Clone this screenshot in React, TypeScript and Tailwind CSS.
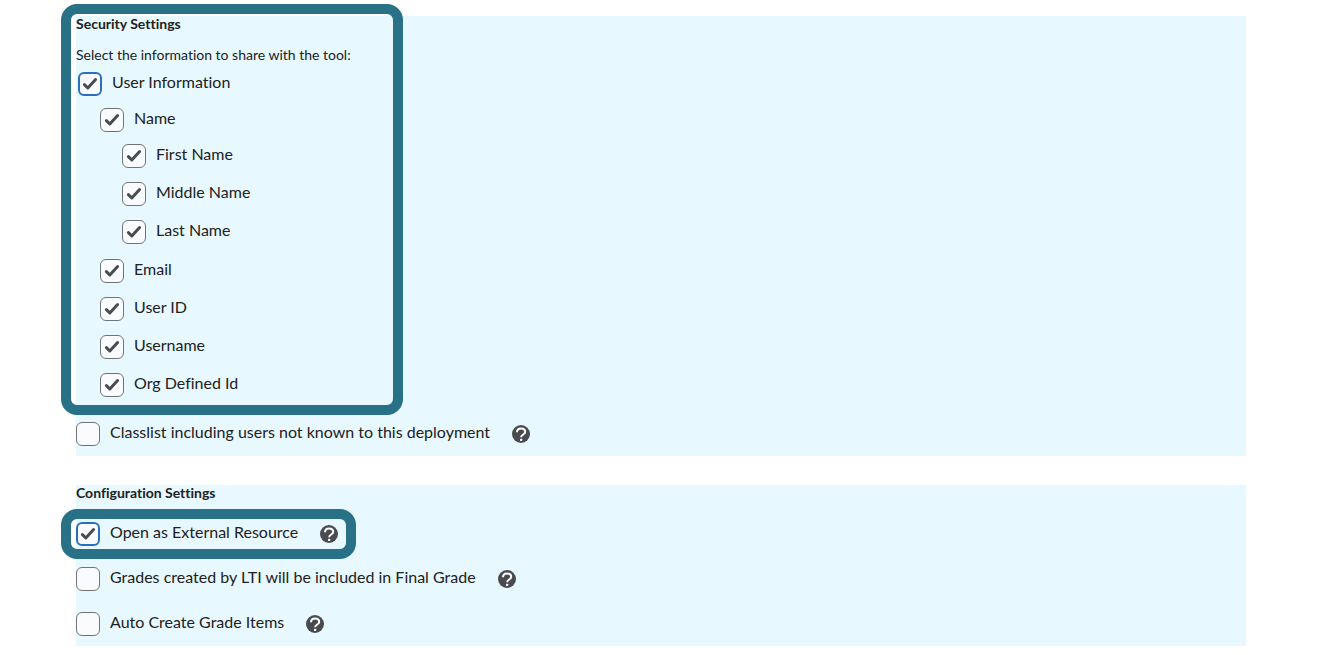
import { useState, type ReactNode } from "react";

function CheckMark() {
  return (
    <svg
      viewBox="0 0 24 24"
      aria-hidden="true"
      className="pointer-events-none col-start-1 row-start-1 hidden size-6 peer-checked:block"
    >
      <path
        d="M6.4 12.6 9.8 16 17.6 7.6"
        fill="none"
        stroke="#494c4e"
        strokeWidth="3"
        strokeLinecap="round"
        strokeLinejoin="round"
      />
    </svg>
  );
}

function HelpButton({ topic }: { topic: string }) {
  return (
    <button type="button" aria-label={`Help: ${topic}`} className="size-[18px] shrink-0">
      <svg viewBox="0 0 18 18" aria-hidden="true" className="block size-[18px]">
        <circle cx="9" cy="9" r="9" fill="#494c4e" />
        <path
          d="M5 7.3C5 5 6.8 3.5 9.1 3.5s4.1 1.4 4.1 3.5c0 2.7-4.1 2.3-4.1 5.2"
          fill="none"
          stroke="#ffffff"
          strokeWidth="2"
        />
        <rect x="8" y="13.7" width="2.2" height="2.2" rx="0.6" fill="#ffffff" />
      </svg>
    </button>
  );
}

type CheckRowProps = {
  id: string;
  label: string;
  checked?: boolean;
  active?: boolean;
  help?: boolean;
};

function CheckRow({ id, label, checked = false, active = false, help = false }: CheckRowProps) {
  const [on, setOn] = useState(checked);
  return (
    <div className="flex h-6 items-center">
      <span className="grid shrink-0">
        <input
          id={id}
          type="checkbox"
          checked={on}
          onChange={(e) => setOn(e.target.checked)}
          className={`peer col-start-1 row-start-1 size-6 appearance-none rounded-md bg-[#f9fbff] ${
            active ? "border-2 border-[#2b6fc0]" : "border border-[#6e7477]"
          }`}
        />
        <CheckMark />
      </span>
      <label htmlFor={id} className="pr-[22px] pb-1 pl-2.5 text-base leading-5">
        {label}
      </label>
      {help && <HelpButton topic={label} />}
    </div>
  );
}

function Section({ title, children }: { title: string; children: ReactNode }) {
  return (
    <section className="bg-[#e8f8ff] pb-2.5">
      <h2 className="text-sm leading-4 font-bold">{title}</h2>
      {children}
    </section>
  );
}

export default function App() {
  return (
    <main className="flex flex-col gap-[29px] bg-white pt-4 pr-[79px] pb-2.5 pl-[76px] font-['Lato',sans-serif] text-[#202122] [font-variant-ligatures:none]">
      <div className="relative">
        <Section title="Security Settings">
          <p className="mt-[15px] text-sm leading-4">Select the information to share with the tool:</p>
          <div className="mt-[9px] pl-0.5">
            <CheckRow id="user-info" label="User Information" checked active />
            <ul className="mt-3 flex flex-col gap-3.5 pl-[22px]">
              <li>
                <CheckRow id="name" label="Name" checked />
                <ul className="mt-3 flex flex-col gap-3.5 pb-px pl-[22px]">
                  <li><CheckRow id="first-name" label="First Name" checked /></li>
                  <li><CheckRow id="middle-name" label="Middle Name" checked /></li>
                  <li><CheckRow id="last-name" label="Last Name" checked /></li>
                </ul>
              </li>
              <li><CheckRow id="email" label="Email" checked /></li>
              <li><CheckRow id="user-id" label="User ID" checked /></li>
              <li><CheckRow id="username" label="Username" checked /></li>
              <li><CheckRow id="org-id" label="Org Defined Id" checked /></li>
            </ul>
          </div>
          <div className="mt-[25px]">
            <CheckRow id="classlist" label="Classlist including users not known to this deployment" help />
          </div>
        </Section>
        <div className="pointer-events-none absolute -top-3 bottom-[41px] -left-[15px] w-[342px] rounded-2xl border-10 border-[#287187]" />
      </div>

      <Section title="Configuration Settings">
        <div className="mt-[21px] flex flex-col items-start gap-[21px]">
          <div className="relative">
            <CheckRow id="external" label="Open as External Resource" checked active help />
            <div className="pointer-events-none absolute -top-[13px] -right-[18px] -bottom-[13px] -left-[15px] rounded-2xl border-10 border-[#287187]" />
          </div>
          <CheckRow id="grades" label="Grades created by LTI will be included in Final Grade" help />
          <CheckRow id="auto-create" label="Auto Create Grade Items" help />
        </div>
      </Section>
    </main>
  );
}
